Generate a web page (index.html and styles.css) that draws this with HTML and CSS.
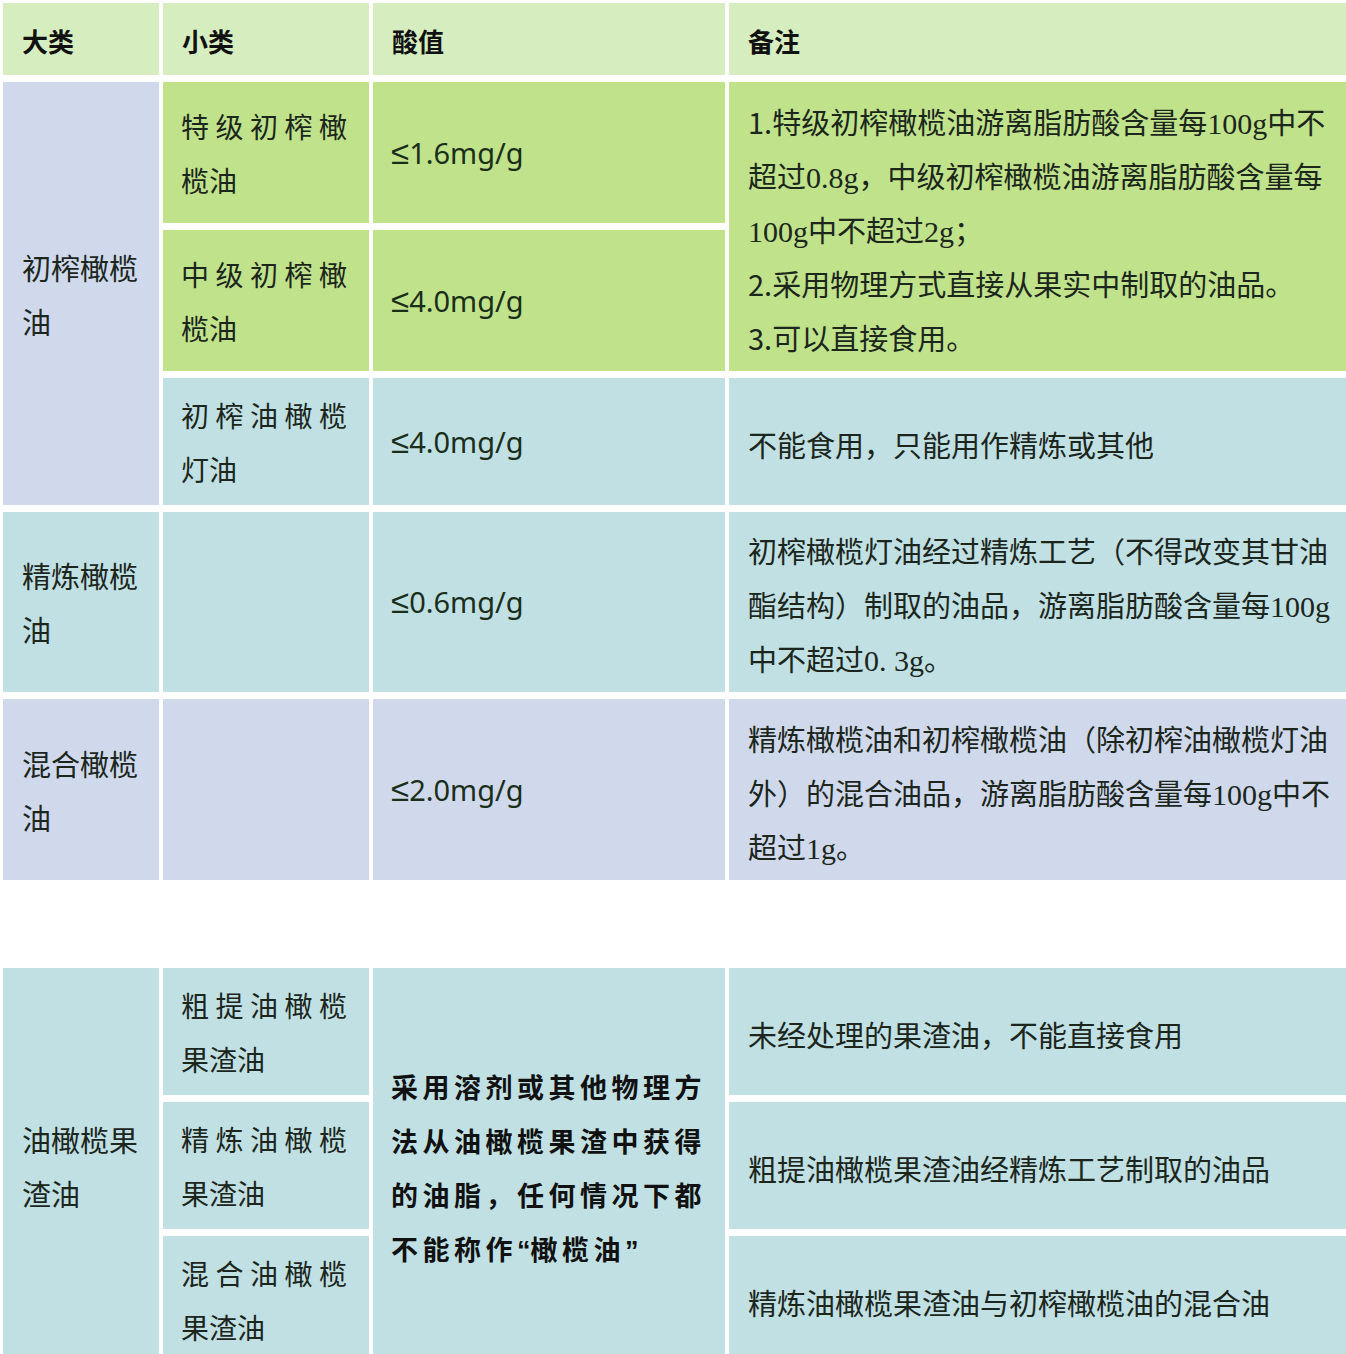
FILE: index.html
```html
<!DOCTYPE html>
<html lang="zh-CN">
<head>
<meta charset="utf-8">
<title>橄榄油分类</title>
<link rel="stylesheet" href="styles.css">
</head>
<body>
<div class="sheet top">
  <div class="cell head"><p>大类</p></div>
  <div class="cell head"><p>小类</p></div>
  <div class="cell head"><p>酸值</p></div>
  <div class="cell head"><p>备注</p></div>

  <div class="cell cat lav span3"><p>初榨橄榄油</p></div>
  <div class="cell sub green"><p>特级初榨橄榄油</p></div>
  <div class="cell acid green"><p><span class="le">≤</span>1.6mg/g</p></div>
  <div class="cell note green span2"><p>1.特级初榨橄榄油游离脂肪酸含量每<span class="num">100g</span>中不<br>超过<span class="num">0.8g</span>，中级初榨橄榄油游离脂肪酸含量每<br><span class="num">100g</span>中不超过<span class="num">2g</span>；<br>2.采用物理方式直接从果实中制取的油品。<br>3.可以直接食用。</p></div>
  <div class="cell sub green"><p>中级初榨橄榄油</p></div>
  <div class="cell acid green"><p><span class="le">≤</span>4.0mg/g</p></div>
  <div class="cell sub teal"><p>初榨油橄榄灯油</p></div>
  <div class="cell acid teal"><p><span class="le">≤</span>4.0mg/g</p></div>
  <div class="cell note teal"><p>不能食用，只能用作精炼或其他</p></div>

  <div class="cell cat teal"><p>精炼橄榄油</p></div>
  <div class="cell sub teal"></div>
  <div class="cell acid teal"><p><span class="le">≤</span>0.6mg/g</p></div>
  <div class="cell note teal"><p>初榨橄榄灯油经过精炼工艺（不得改变其甘油<br>酯结构）制取的油品，游离脂肪酸含量每<span class="num">100g</span><br>中不超过<span class="num">0. 3g</span>。</p></div>

  <div class="cell cat lav"><p>混合橄榄油</p></div>
  <div class="cell sub lav"></div>
  <div class="cell acid lav"><p><span class="le">≤</span>2.0mg/g</p></div>
  <div class="cell note lav"><p>精炼橄榄油和初榨橄榄油（除初榨油橄榄灯油<br>外）的混合油品，游离脂肪酸含量每<span class="num">100g</span>中不<br>超过<span class="num">1g</span>。</p></div>
</div>

<div class="sheet bottom">
  <div class="cell cat teal span3"><p>油橄榄果渣油</p></div>
  <div class="cell sub teal"><p>粗提油橄榄果渣油</p></div>
  <div class="cell acid bold teal span3"><p>采用溶剂或其他物理方法从油橄榄果渣中获得的油脂，任何情况下都不能称作<span class="q">“</span>橄榄油<span class="q">”</span></p></div>
  <div class="cell note teal"><p>未经处理的果渣油，不能直接食用</p></div>
  <div class="cell sub teal"><p>精炼油橄榄果渣油</p></div>
  <div class="cell note teal"><p>粗提油橄榄果渣油经精炼工艺制取的油品</p></div>
  <div class="cell sub teal"><p>混合油橄榄果渣油</p></div>
  <div class="cell note teal"><p>精炼油橄榄果渣油与初榨橄榄油的混合油</p></div>
</div>
</body>
</html>
```

FILE: styles.css
```css
html, body {
  margin: 0;
  padding: 0;
  background: #ffffff;
}

body {
  padding: 3px 0 0 3px;
  font-family: "Noto Sans CJK SC", "Noto Sans", sans-serif;
  color: #1c261c;
}

p {
  margin: 0;
}

.sheet {
  display: grid;
  grid-template-columns: 156px 206px 352px 617px;
  column-gap: 4px;
  row-gap: 7px;
}

.top {
  grid-template-rows: 72px 141px 141px 127px 180px 181px;
}

.bottom {
  margin-top: 88px;
  grid-template-rows: 127px 127px 127px;
}

.cell {
  display: flex;
  flex-direction: column;
  justify-content: center;
  box-sizing: border-box;
  padding: 0 16px 0 19px;
  font-size: 28px;
  line-height: 54px;
}

.head {
  background: #d6edc0;
  font-weight: 700;
  font-size: 26px;
  color: #111;
  padding-top: 3px;
}

.green { background: #bfe28b; }
.lav { background: #cfd9eb; }
.teal { background: #c0e0e3; }

.span2 { grid-row: span 2; }
.span3 { grid-row: span 3; }

.cat {
  font-size: 29px;
}

.sub {
  padding: 0 22px 0 18px;
  text-align: justify;
  text-justify: inter-character;
}

.acid {
  padding-left: 18px;
  font-family: "Noto Sans", "Noto Sans CJK SC", sans-serif;
  font-size: 29px;
  color: #1a2e1a;
}

.le {
  font-family: "Liberation Sans", sans-serif;
  font-size: 33px;
  line-height: 1;
}

.acid.bold {
  font-family: "Noto Sans CJK SC", sans-serif;
  font-weight: 700;
  font-size: 27px;
  letter-spacing: 4.5px;
  padding-right: 12px;
  padding-top: 6px;
  color: #111;
}

.q {
  font-family: "Liberation Sans", sans-serif;
  letter-spacing: 0;
}

.note {
  padding-left: 19px;
  font-size: 29px;
  white-space: nowrap;
  padding-top: 4px;
}

.num {
  font-family: "Liberation Serif", serif;
  font-size: 30px;
  line-height: 1;
}
```
